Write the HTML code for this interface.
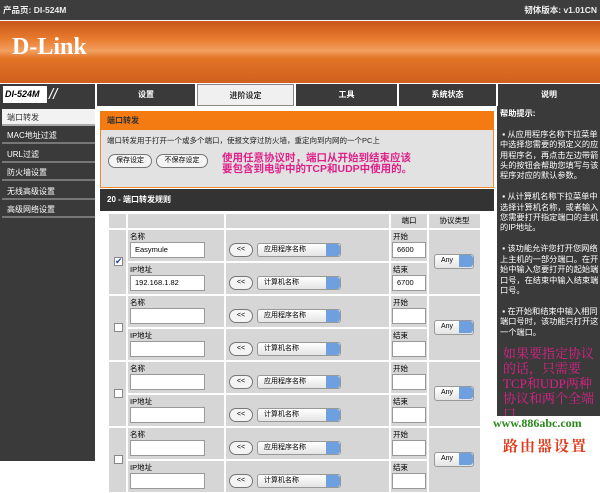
<!DOCTYPE html>
<html><head><meta charset="utf-8"><style>
*{margin:0;padding:0;box-sizing:border-box}
body{width:600px;height:461px;overflow:hidden;background:#fff;font-family:"Liberation Sans","Noto Sans CJK SC",sans-serif;font-size:8px;position:relative}
.a{position:absolute}
.top{left:0;top:0;width:600px;height:20px;background:#3d3d3d;color:#eee;font-size:8.5px;font-weight:bold;line-height:20px;padding:0 3px}
.ban{left:0;top:21px;width:600px;height:62px;background:linear-gradient(180deg,#c8561a 0%,#e97d2f 30%,#f2a060 48%,#e27428 60%,#d0601d 100%)}
.nav{top:84px;height:22px;background:#3a3a3a;color:#fff;font-size:8px;text-align:center;line-height:22px;font-weight:bold}
.side{left:0;top:106px;width:95px;height:355px;background:#3a3a3a}
.si{left:2px;width:93px;height:17px;color:#fff;font-size:8px;line-height:17px;padding-left:5px;border-bottom:2px solid #777}
.help{left:497px;top:106px;width:103px;height:310px;background:#3a3a3a;color:#fff;font-size:8.2px;line-height:10.4px;padding:3px 1px 0 3px}
.tb{border:1px solid #fff;background:#d6d6d6}
.inp{background:#fff;border:1px solid #999;height:16px;font-size:7.5px;line-height:14px;padding-left:4px}
.btn{border:1px solid #777;border-radius:9px;background:#f4f4f4;height:14px;font-size:7px;line-height:12px;text-align:center}
.sel{border:1px solid #999;border-radius:3px;background:linear-gradient(#fff,#e4e4e4);height:14px;font-size:7px;line-height:12px;padding-left:6px}
.sel i{position:absolute;right:0;top:0;width:14px;height:12px;background:#6ea0e0;border-radius:0 3px 3px 0}
.lab{font-size:7.5px}
</style></head><body>
<div class="a top">产品页: DI-524M<span style="float:right">韧体版本: v1.01CN</span></div>
<div class="a ban"></div>
<div class="a" style="left:12px;top:34px;font:bold 24px 'Liberation Serif',serif;color:#fff">D-Link</div>
<div class="a" style="left:0;top:84px;width:95px;height:22px;background:#3a3a3a"></div>
<div class="a" style="left:3px;top:86px;width:44px;height:17px;background:#fff;font:bold italic 9px 'Liberation Sans',sans-serif;line-height:17px;padding-left:2px">DI-524M</div>
<div class="a" style="left:49px;top:86px;color:#fff;font:italic 15px sans-serif">//</div>
<div class="a nav" style="left:97px;width:98px">设置</div>
<div class="a nav" style="left:197px;width:97px;background:#f0f0f0;color:#333;border:1px solid #888">进阶设定</div>
<div class="a nav" style="left:296px;width:101px">工具</div>
<div class="a nav" style="left:399px;width:97px">系统状态</div>
<div class="a nav" style="left:498px;width:102px">说明</div>
<div class="a side"></div>
<div class="a si" style="top:109px;background:#f2f2f2;color:#333;border-color:#aaa">端口转发</div>
<div class="a si" style="top:127px">MAC地址过滤</div>
<div class="a si" style="top:146px">URL过滤</div>
<div class="a si" style="top:164px">防火墙设置</div>
<div class="a si" style="top:183px">无线高级设置</div>
<div class="a si" style="top:201px">高级网络设置</div>
<div class="a" style="left:100px;top:111px;width:394px;height:77px;background:#e2e2e2;border:1px solid #f08a30"></div>
<div class="a" style="left:100px;top:111px;width:394px;height:19px;background:#f47b12;color:#333;font-weight:bold;line-height:19px;padding-left:7px">端口转发</div>
<div class="a" style="left:107px;top:135px;font-size:7.5px;color:#222">端口转发用于打开一个或多个端口，使报文穿过防火墙，重定向到内网的一个PC上</div>
<div class="a btn" style="left:108px;top:154px;width:44px">保存设定</div>
<div class="a btn" style="left:156px;top:154px;width:52px">不保存设定</div>
<div class="a" style="left:222px;top:153px;color:#e0208a;font-weight:bold;font-size:10.5px;line-height:11px">使用任意协议时，端口从开始到结束应该<br>要包含到电驴中的TCP和UDP中使用的。</div>
<div class="a" style="left:100px;top:189px;width:394px;height:22px;background:#333;color:#fff;font-weight:bold;line-height:22px;padding-left:7px">20 - 端口转发规则</div>
<div class="a" style="left:100px;top:211px;width:394px;height:250px;background:#fff"></div>
<div class="a tb" style="left:108px;top:213px;width:19px;height:16px"></div>
<div class="a tb" style="left:127px;top:213px;width:98px;height:16px"></div>
<div class="a tb" style="left:225px;top:213px;width:165px;height:16px"></div>
<div class="a tb" style="left:390px;top:213px;width:38px;height:16px;font-size:7.5px;line-height:14px;text-align:center">端口</div>
<div class="a tb" style="left:428px;top:213px;width:53px;height:16px;font-size:7.5px;line-height:14px;text-align:center">协议类型</div>
<div id="rows"></div>
<script>
var h='';
for(var r=0;r<4;r++){var y=229+r*66;
h+='<div class="a tb" style="left:108px;top:'+y+'px;width:19px;height:66px"></div>';
h+='<div class="a" style="left:114px;top:'+(y+28)+'px;width:9px;height:9px;border:1px solid #888;background:#fff;font-size:9px;line-height:7px;color:#24a">'+(r==0?'✔':'')+'</div>';
for(var s=0;s<2;s++){var yy=y+s*33;
h+='<div class="a tb" style="left:127px;top:'+yy+'px;width:98px;height:33px"><div class="lab" style="margin:1px 2px">'+(s?'IP地址':'名称')+'</div></div>';
h+='<div class="a inp" style="left:130px;top:'+(yy+13)+'px;width:75px">'+(r==0?(s?'192.168.1.82':'Easymule'):'')+'</div>';
h+='<div class="a tb" style="left:225px;top:'+yy+'px;width:165px;height:33px"></div>';
h+='<div class="a btn" style="left:229px;top:'+(yy+14)+'px;width:24px">&lt;&lt;</div>';
h+='<div class="a sel" style="left:257px;top:'+(yy+14)+'px;width:84px">'+(s?'计算机名称':'应用程序名称')+'<i></i></div>';
h+='<div class="a tb" style="left:390px;top:'+yy+'px;width:38px;height:33px"><div class="lab" style="margin:1px 2px">'+(s?'结束':'开始')+'</div></div>';
h+='<div class="a inp" style="left:392px;top:'+(yy+13)+'px;width:34px">'+(r==0?(s?'6700':'6600'):'')+'</div>';}
h+='<div class="a tb" style="left:428px;top:'+y+'px;width:53px;height:66px"></div>';
h+='<div class="a sel" style="left:434px;top:'+(y+25)+'px;width:40px;height:15px">Any<i></i></div>';}
document.getElementById('rows').innerHTML=h;
</script>
<div class="a help"><b>帮助提示:</b><br><br>&nbsp;▪ 从应用程序名称下拉菜单中选择您需要的预定义的应用程序名，再点击左边带箭头的按钮会帮助您填写与该程序对应的默认参数。<br><br>&nbsp;▪ 从计算机名称下拉菜单中选择计算机名称，或者输入您需要打开指定端口的主机的IP地址。<br><br>&nbsp;▪ 该功能允许您打开您网络上主机的一部分端口。在开始中输入您要打开的起始端口号，在结束中输入结束端口号。<br><br>&nbsp;▪ 在开始和结束中输入相同端口号时，该功能只打开这一个端口。</div>
<div class="a" style="left:503px;top:346px;width:95px;color:#e0208a;font:13px 'Liberation Serif','Noto Serif CJK SC',serif;line-height:15px;height:70px;overflow:hidden">如果要指定协议的话，只需要TCP和UDP两种协议和两个全端口</div>
<div class="a" style="left:493px;top:416px;color:#2a8a1a;font:bold 12px 'Liberation Serif',serif">www.886abc.com</div>
<div class="a" style="left:503px;top:435px;color:#e03a1a;font:bold 15px 'Noto Serif CJK SC',serif;letter-spacing:2px">路由器设置</div>
</body></html>
